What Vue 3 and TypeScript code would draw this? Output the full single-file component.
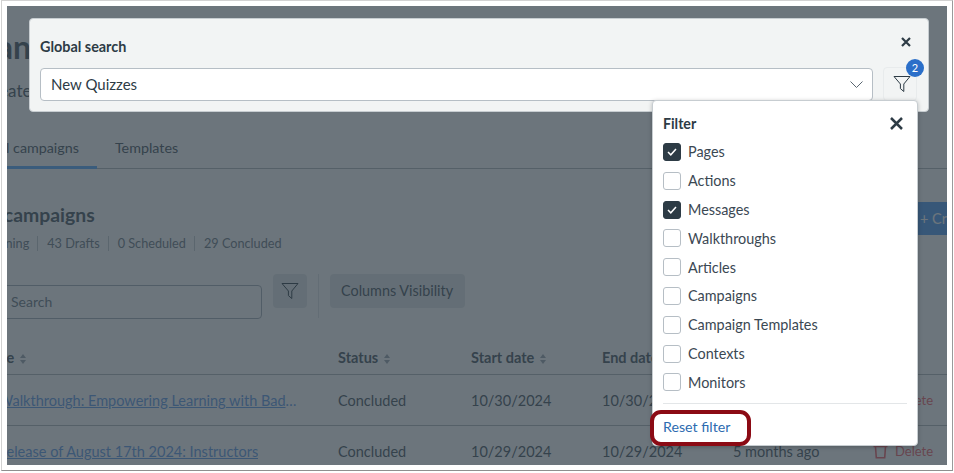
<script setup lang="ts">
import { ref } from 'vue'

interface Row { name: string; start: string; end: string; updated: string }

const stats = ['0 Running', '43 Drafts', '0 Scheduled', '29 Concluded']
const rows: Row[] = [
  { name: 'Pro Walkthrough: Empowering Learning with Badges and Certificates', start: '10/30/2024', end: '10/30/2024', updated: '5 months ago' },
  { name: 'Fall Release of August 17th 2024: Instructors', start: '10/29/2024', end: '10/29/2024', updated: '5 months ago' },
]
const filters = ref([
  { label: 'Pages', on: true },
  { label: 'Actions', on: false },
  { label: 'Messages', on: true },
  { label: 'Walkthroughs', on: false },
  { label: 'Articles', on: false },
  { label: 'Campaigns', on: false },
  { label: 'Campaign Templates', on: false },
  { label: 'Contexts', on: false },
  { label: 'Monitors', on: false },
])
</script>

<template>
  <div class="frame">
    <div class="screen">
      <div class="page">
        <h1 class="title">Manage campaigns</h1>
        <p class="subtitle">Create and manage</p>
        <div class="tabs">
          <span class="tab active">All campaigns</span>
          <span class="tab">Templates</span>
        </div>
        <div class="section-head">
          <h2 class="section-title">All campaigns</h2>
          <span class="create">+ Create campaign</span>
        </div>
        <div class="stats">
          <span v-for="s in stats" :key="s" class="stat">{{ s }}</span>
        </div>
        <div class="toolbar">
          <div class="search">Search</div>
          <span class="icon-btn">
            <svg width="18" height="18" viewBox="0 0 18 18" fill="none" stroke="#2d3b45" stroke-width="1"><path d="M1 1.5H17L10.8 9V16.5L7.4 13.6V9Z" /></svg>
          </span>
          <span class="tool-sep"></span>
          <span class="text-btn">Columns Visibility</span>
        </div>
        <div class="table-row head">
          <span class="cell name">Name <i class="sort"></i></span>
          <span class="cell status">Status <i class="sort"></i></span>
          <span class="cell date">Start date <i class="sort"></i></span>
          <span class="cell date">End date <i class="sort"></i></span>
          <span class="cell updated">Updated <i class="sort"></i></span>
        </div>
        <div v-for="r in rows" :key="r.name" class="table-row body">
          <span class="cell name"><a class="link">{{ r.name }}</a></span>
          <span class="cell status">Concluded</span>
          <span class="cell date">{{ r.start }}</span>
          <span class="cell date">{{ r.end }}</span>
          <span class="cell updated">{{ r.updated }}</span>
          <span class="cell del">
            <svg width="15" height="16" viewBox="0 0 15 16" fill="none" stroke="#f06068" stroke-width="1.6"><path d="M0.5 3.5H14.5M5 3V1.2H10V3M2.5 4L3.3 14.8H11.7L12.5 4" /></svg>
            Delete
          </span>
        </div>
      </div>

      <div class="scrim"></div>

      <section class="search-panel">
        <div class="panel-head">
          <label class="panel-label">Global search</label>
          <svg class="panel-close" width="10" height="10" viewBox="0 0 10 10" stroke="#2d3b45" stroke-width="2.2"><path d="M1 1L9 9M9 1L1 9" /></svg>
        </div>
        <div class="panel-row">
          <div class="select">
            <span>New Quizzes</span>
            <svg width="13" height="7" viewBox="0 0 13 7" fill="none" stroke="#5a6671" stroke-width="1"><path d="M0.5 0.5L6.5 6.5L12.5 0.5" /></svg>
          </div>
          <span class="funnel">
            <svg width="18" height="18" viewBox="0 0 18 18" fill="none" stroke="#2d3b45" stroke-width="1"><path d="M1 1.5H17L10.8 9V16.5L7.4 13.6V9Z" /></svg>
            <b class="badge">2</b>
          </span>
        </div>
      </section>

      <section class="popover">
        <div class="pop-head">
          <strong>Filter</strong>
          <svg width="13" height="13" viewBox="0 0 13 13" stroke="#2d3b45" stroke-width="2.5"><path d="M1 1L12 12M12 1L1 12" /></svg>
        </div>
        <div v-for="f in filters" :key="f.label" class="check-row">
          <span class="box" :class="{ on: f.on }">
            <svg v-if="f.on" width="10" height="8" viewBox="0 0 10 8" fill="none" stroke="#fff" stroke-width="1.5"><path d="M1 4L3.8 6.8L9 1" /></svg>
          </span>
          <span>{{ f.label }}</span>
        </div>
        <div class="pop-sep"></div>
        <a class="reset">Reset filter</a>
      </section>

      <div class="callout"></div>
    </div>
  </div>
</template>

<style scoped>
.frame {
  box-sizing: border-box;
  margin-left: 1px;
  width: 952px;
  height: 471px;
  padding: 5px;
  background: #fff;
  border: 1px solid #d2d2d2;
  border-right-color: #9a9a9a;
  border-bottom-color: #8f8f8f;
  font-family: Lato, "Liberation Sans", sans-serif;
  color: #47545e;
}
.screen {
  position: relative;
  width: 940px;
  height: 459px;
  overflow: hidden;
  background: #fff;
}
.page {
  width: 1120px;
  margin-left: -31px;
  padding-top: 21px;
}
.title {
  margin: 0 0 0 -9px;
  height: 40px;
  font-size: 32px;
  line-height: 40px;
  font-weight: 700;
  white-space: nowrap;
}
.subtitle {
  margin: 13px 0 0 6px;
  height: 22px;
  font-size: 17px;
  line-height: 22px;
}
.tabs {
  display: flex;
  margin-top: 27px;
  height: 40px;
  border-bottom: 1px solid #b2b8bc;
  box-sizing: border-box;
}
.tab {
  padding: 9px 18px 0 18px;
  font-size: 14.3px;
  line-height: 20px;
}
.tab.active {
  padding-left: 17px;
  border-bottom: 3px solid #58acff;
  height: 40px;
  box-sizing: border-box;
}
.section-head {
  display: flex;
  justify-content: space-between;
  width: 1060px;
  margin-top: 31px;
}
.section-title {
  margin: 0;
  font-size: 19.4px;
  line-height: 30px;
  font-weight: 700;
}
.create {
  box-sizing: border-box;
  margin-top: 2px;
  padding: 0 14px;
  width: 130px;
  height: 33px;
  line-height: 33px;
  background: #4f9bf0;
  color: #fff;
  font-size: 14.5px;
  white-space: nowrap;
  overflow: hidden;
}
.stats {
  display: flex;
  margin: -2px 0 0 -3px;
  height: 20px;
  font-size: 12.7px;
  color: #6b7883;
}
.stat {
  padding-right: 8px;
  margin-right: 9px;
  border-right: 1px solid #c7cdd1;
  height: 15px;
  margin-top: 3px;
  line-height: 15px;
}
.stat:last-child { border: 0; }
.toolbar {
  display: flex;
  align-items: flex-start;
  margin-top: 21px;
  height: 44px;
}
.search {
  box-sizing: border-box;
  width: 286px;
  height: 34px;
  margin-top: 11px;
  padding-left: 34px;
  border: 1px solid #a6b0b8;
  border-radius: 4px;
  font-size: 14px;
  line-height: 32px;
  color: #6b7883;
}
.icon-btn {
  display: flex;
  align-items: center;
  justify-content: center;
  width: 34px;
  height: 34px;
  margin-left: 11px;
  background: #e4e8ea;
  border-radius: 4px;
}
.tool-sep {
  width: 1px;
  height: 44px;
  margin: 0 11px;
  background: #e0e3e6;
}
.text-btn {
  padding: 0 12px 0 11px;
  height: 34px;
  line-height: 34px;
  background: #e4e8ea;
  border-radius: 4px;
  font-size: 14.4px;
}
.table-row {
  display: flex;
  align-items: center;
  border-bottom: 1px solid #b2b8bc;
  box-sizing: border-box;
  font-size: 14.5px;
}
.table-row.head {
  height: 35px;
  margin-top: 22px;
  font-weight: 700;
}
.table-row.body { height: 51px; }
.cell { flex: none; white-space: nowrap; }
.name { width: 362px; }
.status { width: 133px; }
.date { width: 131px; }
.updated { width: 140px; }
.link {
  display: inline-block;
  margin-left: -3px;
  max-width: 326px;
  overflow: hidden;
  text-overflow: ellipsis;
  vertical-align: bottom;
  color: #5f9ae6;
  text-decoration: underline;
}
.del {
  display: flex;
  align-items: center;
  gap: 7px;
  color: #f06068;
  font-size: 13px;
}
.sort {
  display: inline-block;
  position: relative;
  width: 6px;
  height: 10px;
  margin-left: 2px;
  vertical-align: -1px;
}
.sort::before, .sort::after {
  content: "";
  position: absolute;
  left: 0;
  border-left: 3px solid transparent;
  border-right: 3px solid transparent;
}
.sort::before { top: 0; border-bottom: 4px solid #9aa6af; }
.sort::after { bottom: 0; border-top: 4px solid #9aa6af; }
.scrim {
  position: absolute;
  inset: 0;
  background: rgba(45, 59, 69, 0.7);
}
.search-panel {
  position: absolute;
  left: 22px;
  top: 12px;
  box-sizing: border-box;
  width: 900px;
  height: 94px;
  padding: 17px 10px 0;
  background: #f2f4f4;
  border: 1px solid #c7cdd1;
  border-radius: 4px;
  color: #2d3b45;
}
.panel-head {
  display: flex;
  justify-content: space-between;
  align-items: center;
  height: 20px;
}
.panel-label {
  font-size: 14.4px;
  font-weight: 700;
}
.panel-close { margin: -8px 7px 0 0; }
.panel-row {
  display: flex;
  align-items: center;
  margin-top: 11px;
}
.select {
  box-sizing: border-box;
  display: flex;
  align-items: center;
  justify-content: space-between;
  width: 833px;
  height: 33px;
  padding: 0 9px 0 10px;
  background: #fff;
  border: 1px solid #b6bec5;
  border-radius: 4px;
  font-size: 15px;
}
.funnel {
  position: relative;
  display: flex;
  align-items: center;
  justify-content: center;
  width: 34px;
  height: 34px;
  margin-left: 10px;
  padding-left: 4px;
  border: 1px solid #e8ebec;
  border-radius: 4px;
  box-sizing: border-box;
}
.badge {
  position: absolute;
  top: -9px;
  right: -8px;
  width: 18px;
  height: 18px;
  border-radius: 50%;
  background: #2b6fc9;
  color: #fff;
  font-size: 11px;
  font-weight: 400;
  line-height: 18px;
  text-align: center;
}
.popover {
  position: absolute;
  left: 645px;
  top: 94px;
  box-sizing: border-box;
  width: 266px;
  height: 346px;
  padding: 7.6px 10px 0;
  background: #fff;
  border: 1px solid #c7cdd1;
  border-radius: 4px;
  box-shadow: 0 1px 4px rgba(0, 0, 0, 0.25);
  font-size: 14.4px;
  color: #2d3b45;
}
.pop-head {
  display: flex;
  justify-content: space-between;
  align-items: center;
  height: 29px;
  padding-right: 4px;
  font-size: 14.2px;
}
.check-row {
  display: flex;
  align-items: center;
  gap: 7px;
  height: 28.8px;
  color: #3b4853;
}
.box {
  box-sizing: border-box;
  display: flex;
  align-items: center;
  justify-content: center;
  width: 18px;
  height: 18px;
  border: 1px solid #b6bec5;
  border-radius: 3px;
}
.box.on {
  background: #2d3b45;
  border-color: #2d3b45;
}
.pop-sep {
  height: 1px;
  margin-top: 6px;
  background: #e3e6e8;
}
.reset {
  display: block;
  margin-top: 12px;
  line-height: 22px;
  color: #2d6bb0;
  font-size: 14.2px;
}
.callout {
  position: absolute;
  left: 643px;
  top: 404px;
  box-sizing: border-box;
  width: 101px;
  height: 36px;
  border: 4px solid #8b0a14;
  border-radius: 11px;
}
</style>

<style>
html, body { margin: 0; background: #fff; }
</style>
